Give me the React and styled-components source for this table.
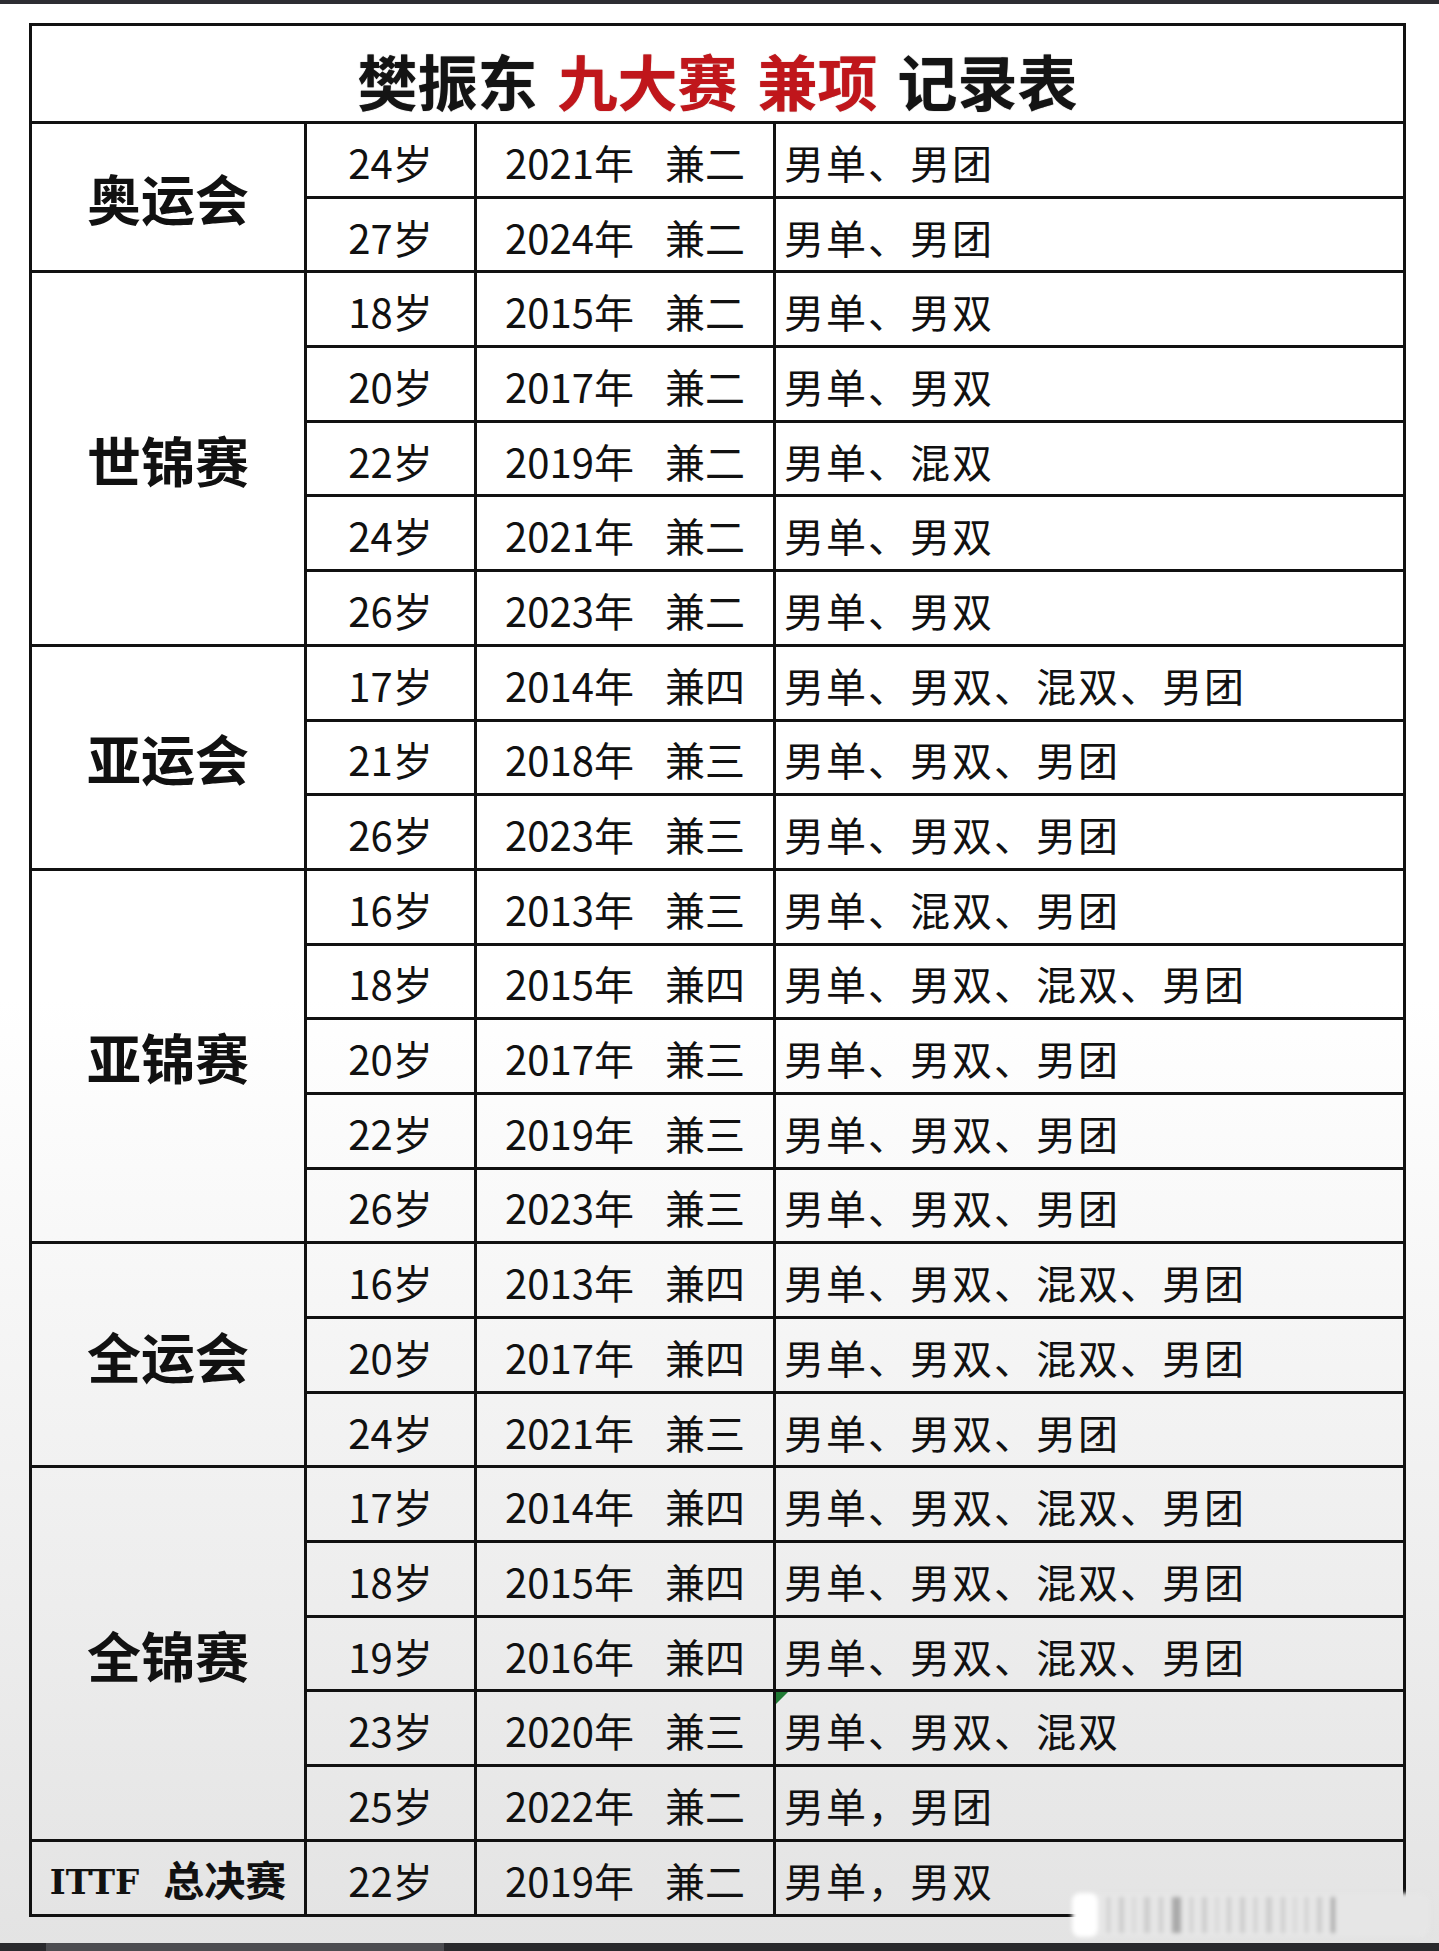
import styled, { createGlobalStyle } from "styled-components";

const GlobalStyle = createGlobalStyle`
  html, body {
    margin: 0;
    padding: 0;
  }
  body {
    width: 1439px;
    min-height: 1951px;
    font-family: "Noto Sans CJK SC", "Noto Sans", sans-serif;
    color: #111;
    background: linear-gradient(
      to bottom,
      #ffffff 0px,
      #ffffff 1000px,
      #f0f0f0 1500px,
      #e3e3e3 1951px
    );
  }
`;

const records = [
  {
    name: "奥运会",
    rows: [
      ["24岁", "2021年", "兼二", "男单、男团"],
      ["27岁", "2024年", "兼二", "男单、男团"],
    ],
  },
  {
    name: "世锦赛",
    rows: [
      ["18岁", "2015年", "兼二", "男单、男双"],
      ["20岁", "2017年", "兼二", "男单、男双"],
      ["22岁", "2019年", "兼二", "男单、混双"],
      ["24岁", "2021年", "兼二", "男单、男双"],
      ["26岁", "2023年", "兼二", "男单、男双"],
    ],
  },
  {
    name: "亚运会",
    rows: [
      ["17岁", "2014年", "兼四", "男单、男双、混双、男团"],
      ["21岁", "2018年", "兼三", "男单、男双、男团"],
      ["26岁", "2023年", "兼三", "男单、男双、男团"],
    ],
  },
  {
    name: "亚锦赛",
    rows: [
      ["16岁", "2013年", "兼三", "男单、混双、男团"],
      ["18岁", "2015年", "兼四", "男单、男双、混双、男团"],
      ["20岁", "2017年", "兼三", "男单、男双、男团"],
      ["22岁", "2019年", "兼三", "男单、男双、男团"],
      ["26岁", "2023年", "兼三", "男单、男双、男团"],
    ],
  },
  {
    name: "全运会",
    rows: [
      ["16岁", "2013年", "兼四", "男单、男双、混双、男团"],
      ["20岁", "2017年", "兼四", "男单、男双、混双、男团"],
      ["24岁", "2021年", "兼三", "男单、男双、男团"],
    ],
  },
  {
    name: "全锦赛",
    rows: [
      ["17岁", "2014年", "兼四", "男单、男双、混双、男团"],
      ["18岁", "2015年", "兼四", "男单、男双、混双、男团"],
      ["19岁", "2016年", "兼四", "男单、男双、混双、男团"],
      ["23岁", "2020年", "兼三", "男单、男双、混双", true],
      ["25岁", "2022年", "兼二", "男单，男团"],
    ],
  },
  {
    name: "ITTF",
    ittf: true,
    rows: [["22岁", "2019年", "兼二", "男单，男双"]],
  },
];

export default function App() {
  return (
    <Page>
      <GlobalStyle />
      <TopBar />
      <Sheet>
        <Table>
          <TitleCell>
            <span>樊振东</span>
            <Red>九大赛</Red>
            <Red>兼项</Red>
            <span>记录表</span>
          </TitleCell>
          {records.map((group) => (
            <Group key={group.name} group={group} />
          ))}
        </Table>
        <Watermark>
          <WmBlob />
          {[3, 5, 2, 6, 4, 9, 3, 5, 2, 4, 5, 3, 6, 4, 2, 3, 5, 4].map((w, i) => (
            <WmBar key={i} $w={w} $dark={i === 5 || i === 17} />
          ))}
        </Watermark>
      </Sheet>
      <BottomBar>
        <BottomSeg $w={46} $c="#2a2a2d" />
        <BottomSeg $w={398} $c="#4c4c50" />
        <BottomSeg $w={995} $c="#29292c" />
      </BottomBar>
    </Page>
  );
}

function Group({ group }) {
  return (
    <>
      <CategoryCell $span={group.rows.length}>
        {group.ittf ? (
          <>
            <Ittf>ITTF</Ittf>
            <IttfName>总决赛</IttfName>
          </>
        ) : (
          group.name
        )}
      </CategoryCell>
      {group.rows.map(([age, year, count, events, mark], i) => (
        <Row key={i}>
          <AgeCell>{age}</AgeCell>
          <YearCell>
            <span>{year}</span>
            <span>{count}</span>
          </YearCell>
          <EventCell>
            {mark && <Mark />}
            {events}
          </EventCell>
        </Row>
      ))}
    </>
  );
}

const Page = styled.div`
  width: 1439px;
  height: 1951px;
  display: flex;
  flex-direction: column;
`;

const TopBar = styled.div`
  height: 4px;
  background: #2d2d32;
`;

const Sheet = styled.div`
  position: relative;
  flex: 1;
  padding: 19px 0 0 29px;
`;

const Table = styled.div`
  width: 1377px;
  box-sizing: border-box;
  display: grid;
  grid-template-columns: 275px 170px 299px 630px;
  grid-template-rows: 98px repeat(24, 74.7px);
  border-top: 3px solid #111;
  border-left: 3px solid #111;
`;

const Cell = styled.div`
  box-sizing: border-box;
  border-right: 3px solid #111;
  border-bottom: 3px solid #111;
  display: flex;
  align-items: center;
  position: relative;
  font-size: 40px;
  line-height: 1;
  white-space: nowrap;
`;

const TitleCell = styled(Cell)`
  grid-column: 1 / span 4;
  justify-content: center;
  gap: 20px;
  padding-top: 12px;
  font-size: 60px;
  font-weight: 700;
  color: #141414;
  text-shadow: 0 0 1px rgba(0, 0, 0, 0.6);
`;

const Red = styled.span`
  color: #c0161b;
  text-shadow: 0 0 1px rgba(120, 0, 0, 0.6);
`;

const CategoryCell = styled(Cell)`
  grid-column: 1;
  grid-row: span ${(p) => p.$span};
  justify-content: center;
  font-size: 54px;
  font-weight: 700;
  padding-top: 2px;
`;

const Ittf = styled.span`
  font-family: "DejaVu Serif", "Liberation Serif", serif;
  font-weight: 700;
  font-size: 34px;
  margin: 6px 24px 0 0;
`;

const IttfName = styled.span`
  font-size: 41px;
  font-weight: 700;
`;

const Row = styled.div`
  display: contents;
`;

const AgeCell = styled(Cell)`
  justify-content: center;
  padding-top: 4px;
`;

const YearCell = styled(Cell)`
  justify-content: center;
  gap: 31px;
  padding-top: 4px;
`;

const EventCell = styled(Cell)`
  padding: 4px 0 0 8px;
  letter-spacing: 2px;
`;

const Mark = styled.span`
  position: absolute;
  top: 0;
  left: 0;
  width: 0;
  height: 0;
  border-top: 12px solid #1f7a34;
  border-right: 12px solid transparent;
`;

const Watermark = styled.div`
  position: absolute;
  left: 1072px;
  top: 1889px;
  width: 358px;
  height: 44px;
  display: flex;
  align-items: stretch;
  gap: 9px;
  padding-right: 6px;
  box-sizing: border-box;
  border-radius: 10px;
  background: #e6e6e6;
  filter: blur(2px);
`;

const WmBlob = styled.div`
  width: 26px;
  border-radius: 8px;
  background: #ffffff;
`;

const WmBar = styled.div`
  width: ${(p) => p.$w}px;
  margin: 4px 0;
  background: ${(p) => (p.$dark ? "#a9a9a9" : "#cdcdcd")};
`;

const BottomBar = styled.div`
  height: 8px;
  display: flex;
`;

const BottomSeg = styled.div`
  width: ${(p) => p.$w}px;
  background: ${(p) => p.$c};
`;
